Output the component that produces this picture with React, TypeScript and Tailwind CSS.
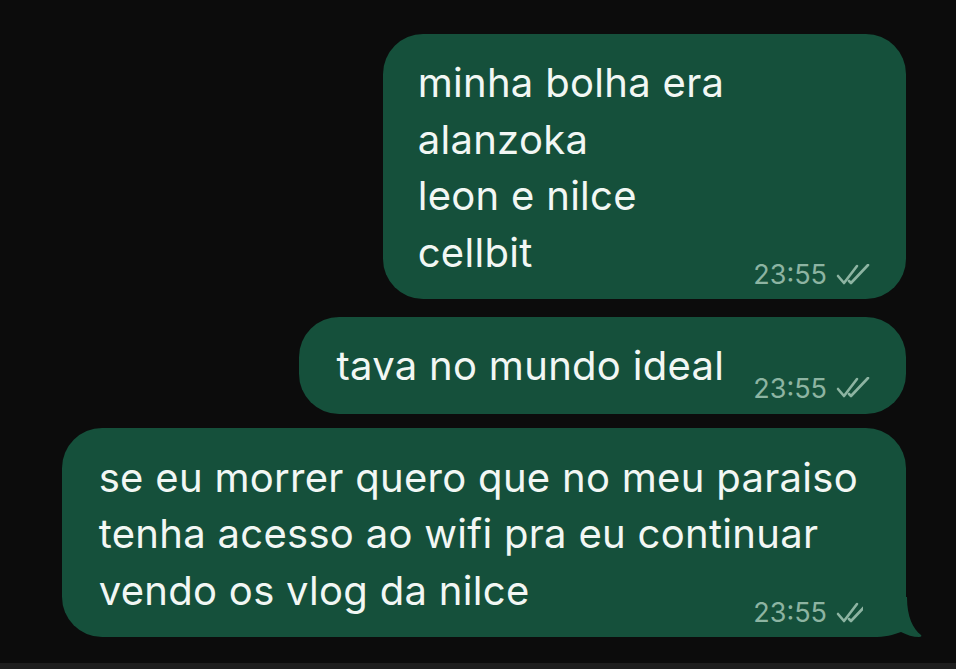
import React from "react";

const Ticks = () => (
  <svg width="36" height="22" viewBox="0 0 36 22" fill="none" stroke="#8db4a2" strokeWidth="2.6" strokeLinecap="round" strokeLinejoin="round">
    <path d="M3 12 L9 19 L22 2" />
    <path d="M14 17 L16 19 L33 1" />
  </svg>
);

const Time = () => (
  <div className="flex items-center gap-[8px] h-[27px] text-[27px] leading-none text-[#8db4a2]" style={{ fontFamily: "Inter, 'Liberation Sans', sans-serif" }}>
    <span>23:55</span>
    <Ticks />
  </div>
);

export default function App() {
  return (
    <div className="w-[956px] h-[669px] bg-[#0c0c0c] flex flex-col overflow-hidden" style={{ fontFamily: "Inter, 'Liberation Sans', sans-serif" }}>
      <div className="flex-1 flex flex-col items-end pr-[50px] pt-[34px]">
        <div className="bg-[#15503b] rounded-[40px] pl-[35px] pr-[35px] pt-[21px] pb-[18px] flex items-end gap-[29px]">
          <div className="text-[40px] leading-[56.5px] tracking-[0.3px] text-[#f2f7f4]">
            <div>minha bolha era</div>
            <div>alanzoka</div>
            <div>leon e nilce</div>
            <div>cellbit</div>
          </div>
          <div className="-mb-[7px]"><Time /></div>
        </div>
        <div className="mt-[18px] bg-[#15503b] rounded-[40px] pl-[37px] pr-[35px] pt-[21px] pb-[19px] flex items-end gap-[29px]">
          <div className="text-[40px] leading-[56.5px] tracking-[0.3px] text-[#f2f7f4]">tava no mundo ideal</div>
          <div className="-mb-[7px]"><Time /></div>
        </div>
        <div className="relative mt-[14px] bg-[#15503b] rounded-[40px] pl-[37px] pr-[48px] pt-[22px] pb-[11px] flex flex-col">
          <div className="text-[40px] leading-[56.5px] tracking-[0.3px] text-[#f2f7f4]">
            <div>se eu morrer quero que no meu paraiso</div>
            <div>tenha acesso ao wifi pra eu continuar</div>
            <div>vendo os vlog da nilce</div>
          </div>
          <div className="flex justify-end -mt-[20px] -mr-[13px]"><Time /></div>
          <svg className="absolute right-[-17px] bottom-0" width="60" height="40" viewBox="0 0 60 40">
            <path d="M0 40 L0 0 L44 0 C44 20 50 32 58 38 C59 39 58 40 56 40 C50 40 44 38 38 35 C30 38 22 40 10 40 Z" fill="#15503b" />
          </svg>
        </div>
      </div>
      <div className="h-[6px] bg-[#1e1e1e]" />
    </div>
  );
}
